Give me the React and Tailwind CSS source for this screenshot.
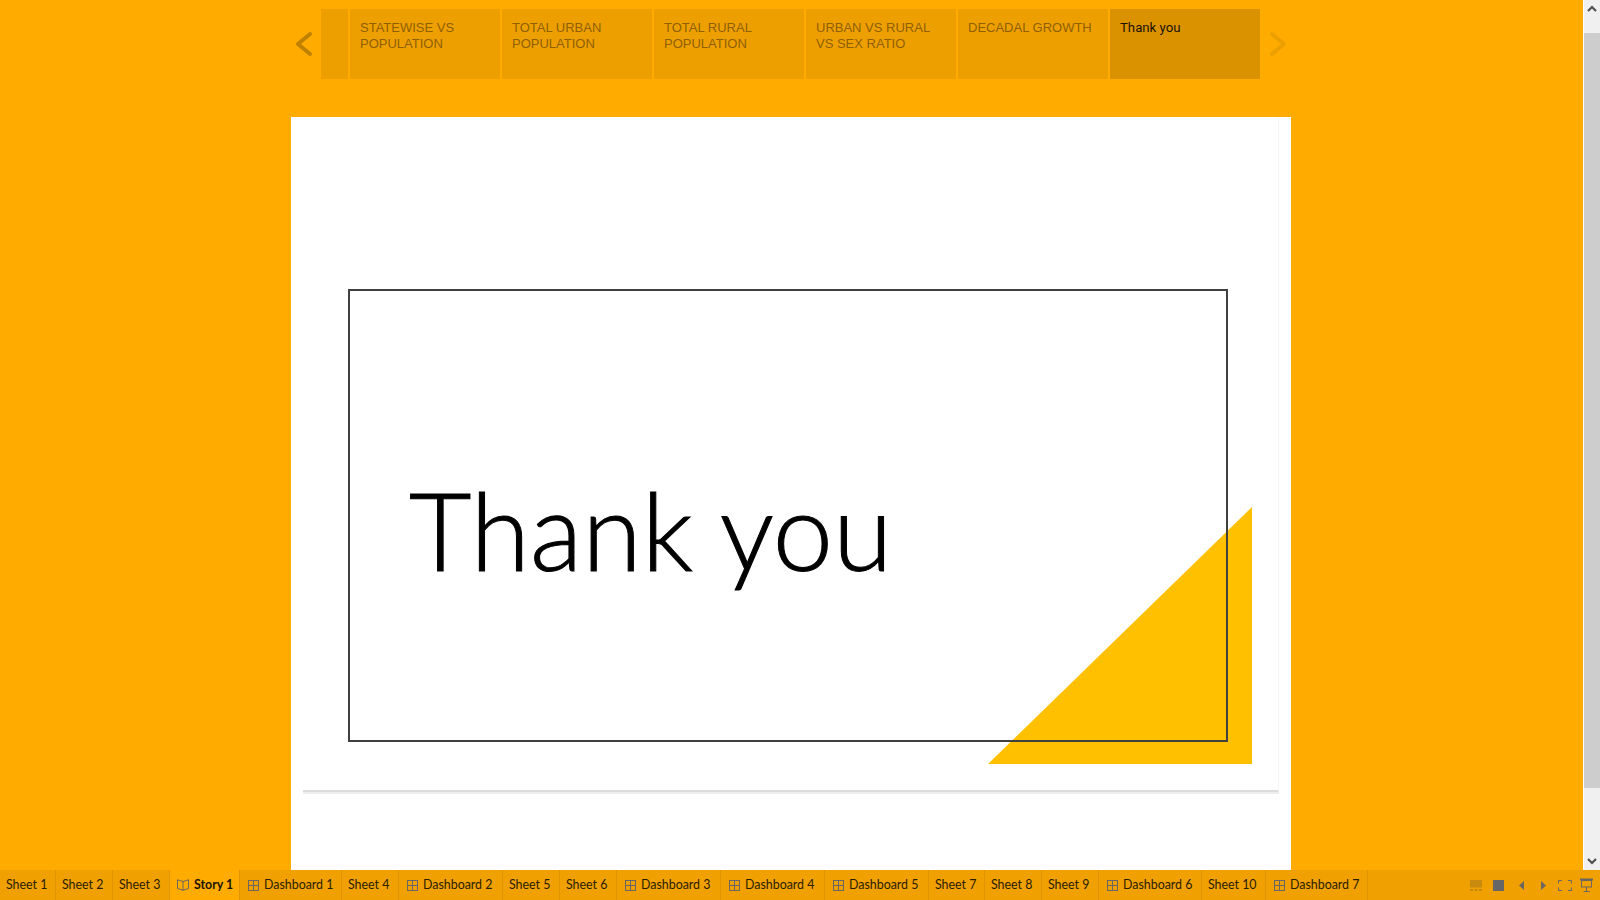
const storyTabs = [
  { w: "w-[27px]", text: "" },
  { w: "w-[150px]", text: "STATEWISE VS POPULATION" },
  { w: "w-[150px]", text: "TOTAL URBAN POPULATION" },
  { w: "w-[150px]", text: "TOTAL RURAL POPULATION" },
  { w: "w-[150px]", text: "URBAN VS RURAL VS SEX RATIO" },
  { w: "w-[150px]", text: "DECADAL GROWTH" },
];

const sheets = [
  { w: "w-[56px]", t: "Sheet 1" },
  { w: "w-[57px]", t: "Sheet 2" },
  { w: "w-[57px]", t: "Sheet 3" },
  { w: "w-[70px]", t: "Story 1", story: true },
  { w: "w-[102px]", t: "Dashboard 1", dash: true },
  { w: "w-[57px]", t: "Sheet 4" },
  { w: "w-[104px]", t: "Dashboard 2", dash: true },
  { w: "w-[57px]", t: "Sheet 5" },
  { w: "w-[57px]", t: "Sheet 6" },
  { w: "w-[104px]", t: "Dashboard 3", dash: true },
  { w: "w-[104px]", t: "Dashboard 4", dash: true },
  { w: "w-[104px]", t: "Dashboard 5", dash: true },
  { w: "w-[56px]", t: "Sheet 7" },
  { w: "w-[57px]", t: "Sheet 8" },
  { w: "w-[57px]", t: "Sheet 9" },
  { w: "w-[103px]", t: "Dashboard 6", dash: true },
  { w: "w-[64px]", t: "Sheet 10" },
  { w: "w-[102px]", t: "Dashboard 7", dash: true },
];

function DashIcon() {
  return (
    <svg width="11" height="11" viewBox="0 0 11 11" className="shrink-0 mr-[5px]" fill="none" stroke="#6b6660" strokeWidth="1">
      <rect x="0.5" y="0.5" width="10" height="10" />
      <path d="M5.5 0.5V10.5M0.5 5.5H10.5" />
    </svg>
  );
}

function BookIcon() {
  return (
    <svg width="12" height="12" viewBox="0 0 12 12" className="shrink-0 mr-[5px]" fill="none" stroke="#6b6660" strokeWidth="1">
      <path d="M6 2.5L0.5 0.8V9.5L6 11.3L11.5 9.5V0.8L6 2.5ZM6 2.5V11.3" />
    </svg>
  );
}

function Chevron({ dir, color }) {
  return (
    <svg width="16" height="24" viewBox="0 0 16 24" fill="none" stroke={color} strokeWidth="3.8" strokeLinecap="round" strokeLinejoin="round">
      <path d={dir === "left" ? "M14 2L2 12L14 22" : "M2 2L14 12L2 22"} />
    </svg>
  );
}

function ScrollArrow({ up }) {
  return (
    <svg width="10" height="7" viewBox="0 0 10 7" fill="none" stroke="#505050" strokeWidth="2.2">
      <path d={up ? "M1 6L5 2L9 6" : "M1 1L5 5L9 1"} />
    </svg>
  );
}

export default function App() {
  return (
    <div className="w-[1600px] h-[900px] overflow-hidden flex flex-col bg-[#ffab00]" style={{ fontFamily: '"Liberation Sans", Arial, sans-serif' }}>
      <div className="flex h-[870px] shrink-0">
        <div className="w-[1583px] pr-[1px] flex flex-col items-center">
          <div className="w-[1000px] h-[117px] shrink-0 flex items-start pt-[9px] pl-[5px]">
            <div className="w-[25px] h-[70px] flex items-center shrink-0">
              <Chevron dir="left" color="#c08000" />
            </div>
            <div className="flex gap-[2px]">
              {storyTabs.map((tab, i) => (
                <div key={i} className={`${tab.w} h-[70px] bg-[#ee9f00] pl-[10px] pr-[10px] pt-[11px] text-[13px] leading-[16px] text-[#8f5f00]`}>
                  {tab.text}
                </div>
              ))}
              <div className="w-[150px] h-[70px] bg-[#da9200] pl-[10px] pt-[11px] text-[13.2px] leading-[16px] text-[#1a1200]" style={{ fontFamily: 'Roboto, sans-serif' }}>
                Thank you
              </div>
            </div>
            <div className="ml-[10px] h-[70px] flex items-center shrink-0">
              <Chevron dir="right" color="#eb9f00" />
            </div>
          </div>
          <div className="w-[1000px] h-[753px] bg-white px-[12px] overflow-hidden">
            <div className="relative h-[675px] border-r border-[#f6f6f6] border-b-2 border-b-[#dcdcdc] shadow-[0_2px_0_#eeeeee] pt-[172px] pl-[45px]">
              <svg className="absolute left-[685px] top-[390px]" width="264" height="257" viewBox="0 0 264 257">
                <polygon points="0,257 264,0 264,257" fill="#ffc000" />
              </svg>
              <div className="relative w-[880px] h-[453px] border-2 border-[#404040] pl-[59px] pt-[183px]">
                <div className="text-[#000] text-[108px] leading-[110px] font-light [-webkit-text-stroke:1px_black]" style={{ fontFamily: 'Lato, sans-serif' }}>Thank you</div>
              </div>
            </div>
          </div>
        </div>
        <div className="w-[17px] h-full border-l border-white bg-[#f0f0f0] flex flex-col items-center">
          <div className="h-[17px] flex items-center justify-center shrink-0"><ScrollArrow up /></div>
          <div className="mt-[16px] w-full h-[755px] bg-[#cdcdcd] shrink-0" />
          <div className="mt-auto h-[17px] flex items-center justify-center shrink-0"><ScrollArrow /></div>
        </div>
      </div>
      <div className="h-[30px] shrink-0 bg-[#f0a000] flex items-stretch text-[12.4px] text-[#2a2000]" style={{ fontFamily: 'Lato, sans-serif' }}>
        {sheets.map((s, i) => (
          <div key={i} className={`${s.w} flex items-center ${s.dash ? "pl-[8px]" : s.story ? "pl-[7px]" : "pl-[6px]"} border-r border-[#e09400] shrink-0 whitespace-nowrap ${s.story ? "bg-[#ffab00] font-bold text-[#1a1400]" : ""}`}>
            {s.dash && <DashIcon />}
            {s.story && <BookIcon />}
            {s.t}
          </div>
        ))}
        <div className="ml-auto flex items-center pr-[7px]">
          <svg width="12" height="11" viewBox="0 0 12 11" className="mr-[11px]" fill="#c98a10">
            <rect x="0" y="0" width="12" height="7.5" />
            <rect x="0" y="9" width="3" height="2" />
            <rect x="4.5" y="9" width="3" height="2" />
            <rect x="9" y="9" width="3" height="2" />
          </svg>
          <svg width="11" height="11" viewBox="0 0 11 11" className="mr-[15px]" fill="#666666">
            <rect width="11" height="11" />
          </svg>
          <svg width="5" height="9" viewBox="0 0 5 9" className="mr-[17px]" fill="#6b6660">
            <polygon points="5,0 0,4.5 5,9" />
          </svg>
          <svg width="5" height="9" viewBox="0 0 5 9" className="mr-[12px]" fill="#6b6660">
            <polygon points="0,0 5,4.5 0,9" />
          </svg>
          <svg width="14" height="11" viewBox="0 0 14 11" className="mr-[8px]" fill="none" stroke="#6b6660" strokeWidth="1">
            <path d="M0.5 3.5V0.5H4M10 0.5H13.5V3.5M13.5 7.5V10.5H10M4 10.5H0.5V7.5" />
          </svg>
          <svg width="13" height="14" viewBox="0 0 13 14" fill="none" stroke="#6b6660" strokeWidth="1">
            <path d="M0 1.5H13" strokeWidth="2" />
            <rect x="1.5" y="2.5" width="10" height="6.5" />
            <path d="M6.5 9V13M3.5 13.5H9.5" />
          </svg>
        </div>
      </div>
    </div>
  );
}
